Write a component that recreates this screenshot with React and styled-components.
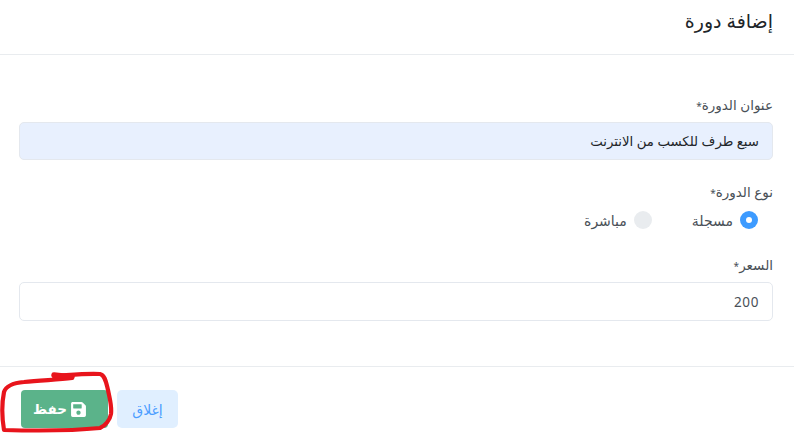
import React from "react";
import styled, { createGlobalStyle } from "styled-components";
import { FaSave } from "react-icons/fa";

const Global = createGlobalStyle`
	html, body {
		margin: 0;
		padding: 0;
		background: #fff;
	}
	* {
		box-sizing: border-box;
	}
`;

const Modal = styled.div`
	position: relative;
	width: 794px;
	height: 443px;
	overflow: hidden;
	direction: rtl;
	font-family: "Noto Sans", "DejaVu Sans", "Liberation Sans", sans-serif;
	color: #343a40;
`;

const Header = styled.header`
	height: 55px;
	padding: 8px 21px 0;
	border-bottom: 1px solid #e9ecef;
	font-size: 19px;
	line-height: 26px;
	color: #212529;
`;

const Body = styled.main`
	height: 311px;
	padding: 38px 21px 0 19px;
`;

const Field = styled.div`
	margin-bottom: 20px;
`;

const Label = styled.label`
	display: block;
	height: 29px;
	font-size: 13.5px;
	line-height: 25px;
	color: #495057;
`;

const Star = styled.span`
	font-size: 10px;
`;

const Input = styled.div`
	height: ${(p) => (p.$filled ? "38px" : "39px")};
	padding: 0 13px;
	display: flex;
	align-items: center;
	font-size: ${(p) => (p.$filled ? "13.3px" : "13.5px")};
	letter-spacing: ${(p) => (p.$filled ? "0" : "0.6px")};
	color: ${(p) => (p.$filled ? "#212529" : "#495057")};
	background: ${(p) => (p.$filled ? "#e8f0fe" : "#fff")};
	border: 1px solid #e4e8ee;
	border-radius: 5px;
`;

const RadioRow = styled.div`
	display: flex;
	height: 24px;
	align-items: center;
	padding: 0 15px 2px 0;
	gap: 40px;
`;

const Radio = styled.div`
	display: flex;
	align-items: center;
	gap: 7px;
	font-size: 14px;
	color: #495057;
`;

const Dot = styled.span`
	width: 18px;
	height: 18px;
	border-radius: 50%;
	background: ${(p) => (p.$on ? "#3d9bff" : "#e9ecef")};
	display: flex;
	align-items: center;
	justify-content: center;
	&::after {
		content: "";
		display: ${(p) => (p.$on ? "block" : "none")};
		width: 6px;
		height: 6px;
		border-radius: 50%;
		background: #fff;
	}
`;

const Footer = styled.footer`
	height: 77px;
	border-top: 1px solid #e9ecef;
	direction: ltr;
	display: flex;
	gap: 9px;
	padding: 23px 0 0 21px;
`;

const Save = styled.button`
	width: 87px;
	height: 38px;
	border: 0;
	border-radius: 4px;
	background: #5bb38a;
	color: #fff;
	font: 700 13.5px "Noto Sans", "DejaVu Sans", sans-serif;
	display: flex;
	align-items: center;
	justify-content: center;
	gap: 3px;
	padding: 0 9px 0 0;
`;

const Close = styled.button`
	width: 61px;
	height: 38px;
	border: 0;
	border-radius: 5px;
	background: #e0efff;
	color: #4a9dff;
	font: 400 14px "Noto Sans", "DejaVu Sans", sans-serif;
	padding: 0;
`;

const Scribble = styled.svg`
	position: absolute;
	left: 0;
	top: 360px;
	pointer-events: none;
`;

export default function App() {
	return (
		<Modal>
			<Global />
			<Header>إضافة دورة</Header>
			<Body>
				<Field>
					<Label>
						عنوان الدورة<Star>*</Star>
					</Label>
					<Input $filled>سبع طرف للكسب من الانترنت</Input>
				</Field>
				<Field>
					<Label>
						نوع الدورة<Star>*</Star>
					</Label>
					<RadioRow>
						<Radio>
							<Dot $on />
							مسجلة
						</Radio>
						<Radio>
							<Dot />
							مباشرة
						</Radio>
					</RadioRow>
				</Field>
				<Field>
					<Label>
						السعر<Star>*</Star>
					</Label>
					<Input>200</Input>
				</Field>
			</Body>
			<Footer>
				<Save>
					<span>حفظ</span>
					<FaSave size={17} />
				</Save>
				<Close>إغلاق</Close>
			</Footer>
			<Scribble width="120" height="83" viewBox="0 0 120 83">
				<path
					d="M54 16 C70 15 88 13 100 14 C105 15 106 22 108 30 C110 40 112 46 111 54 C110 60 105 66 100 68 C80 70 40 71 4 70 C2 58 2 42 4 32 C6 26 12 23 24 22 C40 20 58 20 72 18"
					fill="none"
					stroke="#e8141c"
					strokeWidth="4.2"
					strokeLinecap="round"
					strokeLinejoin="round"
				/>
				<path d="M54 15 L72 17" fill="none" stroke="#e8141c" strokeWidth="5.5" strokeLinecap="round" />
			</Scribble>
		</Modal>
	);
}
